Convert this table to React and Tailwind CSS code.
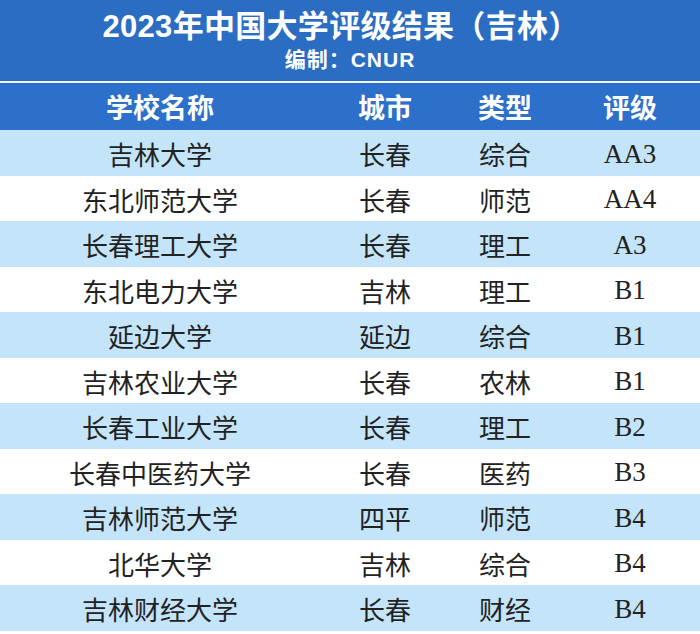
import React from "react";

const rows = [
  ["吉林大学", "长春", "综合", "AA3"],
  ["东北师范大学", "长春", "师范", "AA4"],
  ["长春理工大学", "长春", "理工", "A3"],
  ["东北电力大学", "吉林", "理工", "B1"],
  ["延边大学", "延边", "综合", "B1"],
  ["吉林农业大学", "长春", "农林", "B1"],
  ["长春工业大学", "长春", "理工", "B2"],
  ["长春中医药大学", "长春", "医药", "B3"],
  ["吉林师范大学", "四平", "师范", "B4"],
  ["北华大学", "吉林", "综合", "B4"],
  ["吉林财经大学", "长春", "财经", "B4"],
];

const cjk = "font-['Noto_Sans_CJK_SC',sans-serif]";
const cols = "grid grid-cols-[320px_130px_110px_140px] items-center";

export default function App() {
  return (
    <div className={`w-[700px] h-[634px] bg-white overflow-hidden ${cjk}`}>
      {/* title */}
      <div className="h-[80px] bg-[#2a6dc3] flex flex-col items-center text-white">
        <h1 className="mt-[7px] ml-[-18px] text-[31px] leading-[40px] font-bold tracking-[0.3px] font-['Liberation_Sans','Noto_Sans_CJK_SC',sans-serif]">
          2023年中国大学评级结果（吉林）
        </h1>
        <p className="mt-[1px] text-[21px] leading-[24px] font-bold tracking-[1px] font-['Liberation_Sans','Noto_Sans_CJK_SC',sans-serif]">
          编制：CNUR
        </p>
      </div>
      <div className="h-[4px] bg-[#2a6dc3] flex items-center">
        <div className="h-[2px] w-full bg-[#eef6ff]" />
      </div>

      {/* header */}
      <div className={`${cols} h-[46px] bg-[#2c70cb] text-white text-[27px] font-bold text-center`}>
        <span>学校名称</span>
        <span>城市</span>
        <span>类型</span>
        <span>评级</span>
      </div>

      {rows.map((r, i) => (
        <div
          key={i}
          className={`${cols} h-[45.5px] text-center text-[#222] text-[26px] ${
            i % 2 === 0 ? "bg-[#c4e4f9]" : "bg-white"
          }`}
        >
          <span className="pt-[2px]">{r[0]}</span>
          <span className="pt-[2px]">{r[1]}</span>
          <span className="pt-[2px]">{r[2]}</span>
          <span className="pt-[2px] font-['Liberation_Serif',serif] text-[27px]">{r[3]}</span>
        </div>
      ))}
    </div>
  );
}
